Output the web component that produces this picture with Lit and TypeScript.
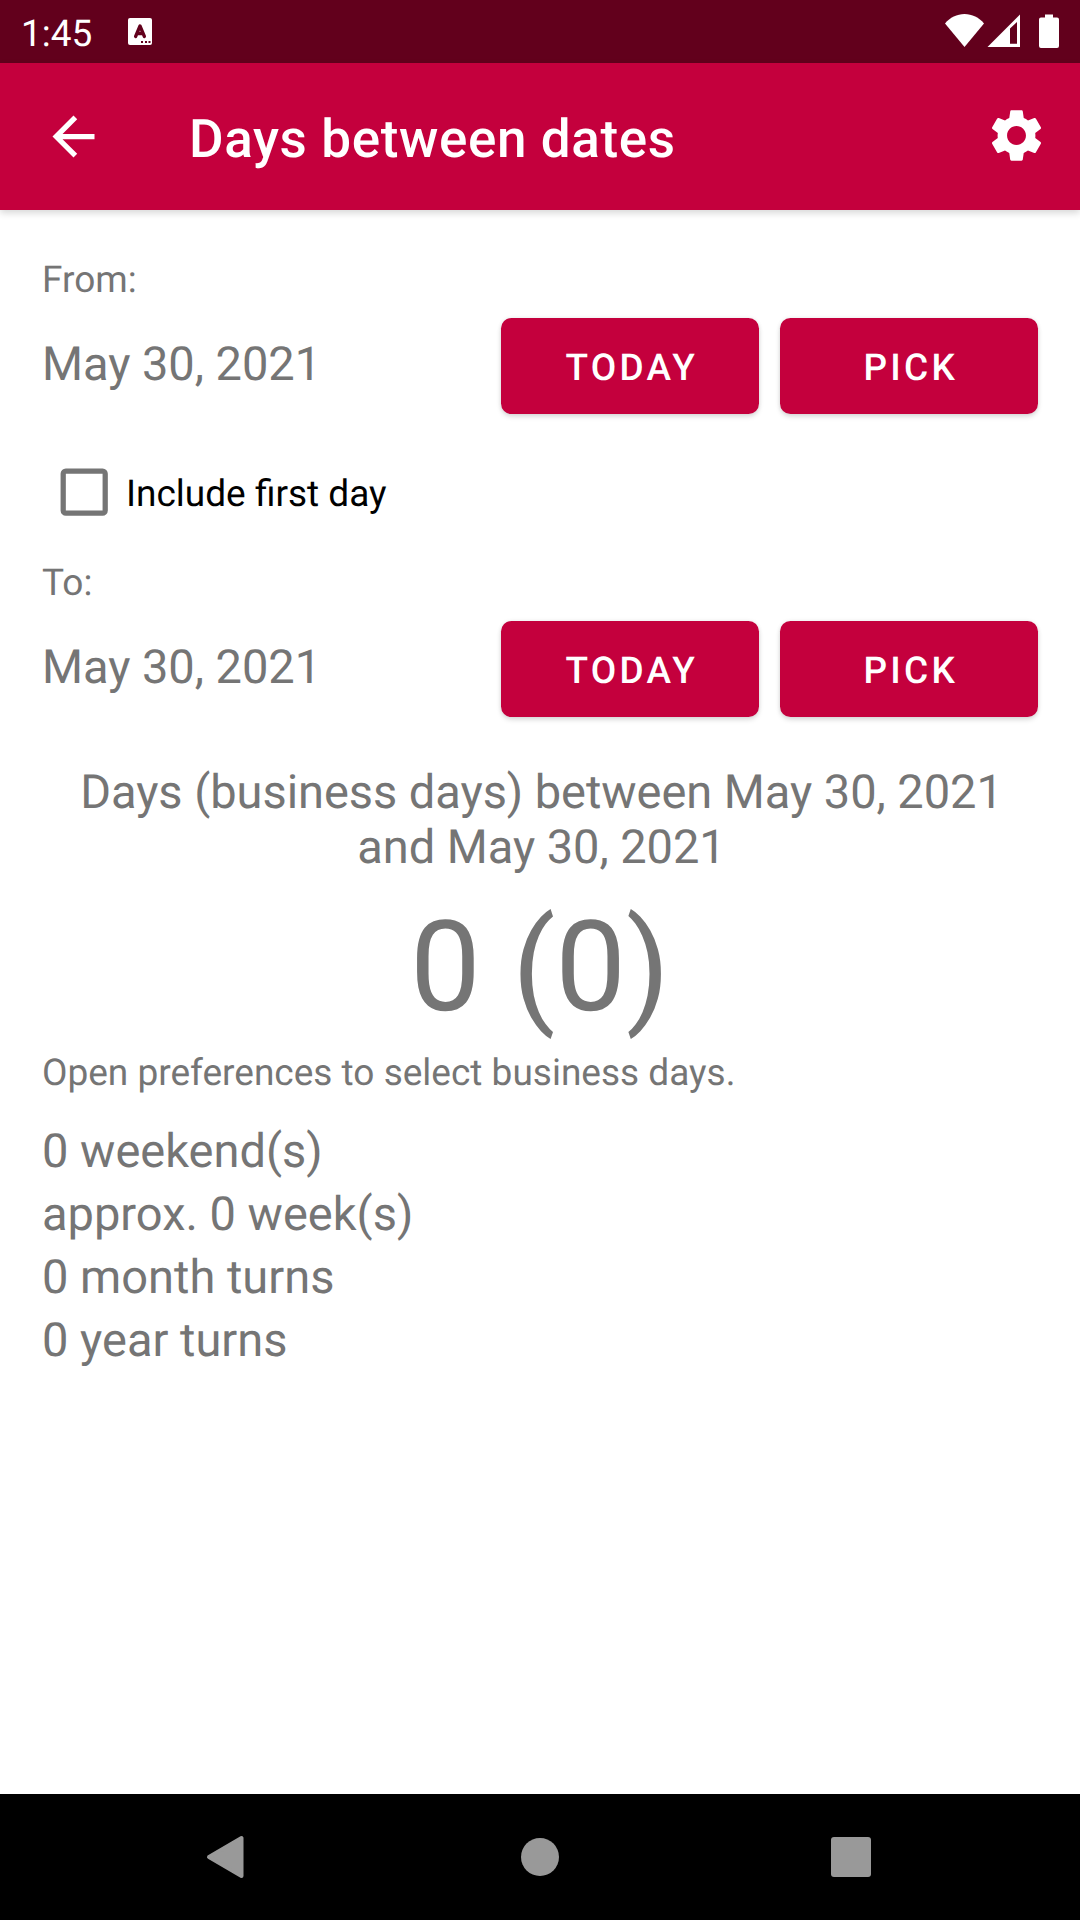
import { LitElement, html, css } from "lit";
import { customElement, property } from "lit/decorators.js";

const TODAY = "May 30, 2021";

@customElement("date-row")
class DateRow extends LitElement {
  @property() label = "";
  @property() value = "";

  static styles = css`
    :host { display: block; }
    .label { font-size: 37px; line-height: 43px; padding-top: 1px; }
    .row { display: flex; margin-top: 16px; height: 96px; align-items: flex-start; gap: 21px; }
    .date { flex: 1; font-size: 47px; line-height: 56px; padding-top: 19px; letter-spacing: -0.04px; }
    .btn {
      box-sizing: border-box; width: 258px; height: 96px; padding: 29px 0 0 3.5px; margin: 0; border: 0;
      border-radius: 10.5px; background: #c4003d; color: #fff; text-align: center;
      font: 500 37px/43px Roboto, sans-serif; letter-spacing: 0.087em;
      box-shadow: 0 3px 5px rgba(0, 0, 0, 0.13), 0 0 4px rgba(0, 0, 0, 0.08);
      display: block;
    }
  `;

  render() {
    return html`
      <div class="label">${this.label}</div>
      <div class="row">
        <div class="date">${this.value}</div>
        <div class="btn" role="button">TODAY</div>
        <div class="btn" role="button">PICK</div>
      </div>
    `;
  }
}

@customElement("app-root")
class AppRoot extends LitElement {
  static styles = css`
    :host {
      display: flex; flex-direction: column; width: 1080px; height: 1920px; overflow: hidden;
      background: #fff; color: #757575; font-family: Roboto, sans-serif;
      text-rendering: geometricPrecision;
    }
    svg { display: block; flex: none; }
    .status {
      display: flex; height: 63px; background: #62001c; color: #fff; box-sizing: border-box;
      padding-left: 21px; flex: none;
    }
    .time { font-size: 37px; line-height: 43px; padding-top: 13px; width: 99px; }
    .fill { flex: 1; }
    .bar {
      display: flex; height: 147px; flex: none; background: #c4003d; color: #fff; align-items: center;
      box-sizing: border-box; padding: 0 32px 0 42px;
      box-shadow: 0 3px 7px rgba(0, 0, 0, 0.16);
    }
    .title { flex: 1; font-size: 53px; line-height: 62px; font-weight: 500; padding: 4px 0 0 84px; letter-spacing: 0.62px; }
    .gear { margin-bottom: 2px; }
    .main { flex: 1; padding: 48px 42px 0; }
    .check { display: flex; margin: 54px 0 45px; height: 48px; padding-left: 18px; gap: 18px; color: #000; }
    .check-label { font-size: 37px; line-height: 43px; padding-top: 5px; }
    .summary { margin-top: 48px; padding-left: 3px; text-align: center; font-size: 47px; line-height: 55px; letter-spacing: -0.05px; }
    .total { margin-top: 18px; text-align: center; font-size: 126px; line-height: 148px; }
    .hint { margin-top: 11px; font-size: 37px; line-height: 43px; }
    .stats { margin-top: 25px; font-size: 47px; line-height: 63px; }
    .nav { flex: none; height: 126px; background: #000; }
  `;

  render() {
    return html`
      <div class="status">
        <div class="time">1:45</div>
        <svg width="40" height="63" viewBox="120 0 40 63">
          <path fill="#fff" d="M130 18h20a2 2 0 0 1 2 2v23a2 2 0 0 1-2 2h-20a2 2 0 0 1-2-2V20a2 2 0 0 1 2-2z" />
          <path fill="none" stroke="#62001c" stroke-width="3.300" stroke-linecap="round" stroke-linejoin="round" d="M135.600 36.500l4.400-10.500 4.400 10.500M137 33.500h6" />
          <path fill="#62001c" d="M141 41h2v2h-2zM145 41h2v2h-2zM148.500 41h2v2h-2z" />
        </svg>
        <div class="fill"></div>
        <svg width="140" height="63" viewBox="940 0 140 63">
          <path fill="#fff" d="M964.500 47L945 23.500C950 17.500 957 14 964.500 14S979 17.500 984 23.500z" />
          <path fill="#fff" fill-rule="evenodd" d="M987.500 47L1020 14.500V47zM1010 43.800h7V22l-7 6.500z" />
          <path fill="#fff" d="M1045 14.500h8v3h4a2 2 0 0 1 2 2V46a2 2 0 0 1-2 2h-16a2 2 0 0 1-2-2V19.500a2 2 0 0 1 2-2h4z" />
        </svg>
      </div>
      <div class="bar">
        <svg width="63" height="63" viewBox="0 0 24 24">
          <path fill="#fff" d="M20 11H7.830l5.590-5.590L12 4l-8 8 8 8 1.410-1.410L7.830 13H20z" />
        </svg>
        <div class="title">Days between dates</div>
        <svg class="gear" width="63" height="63" viewBox="0 0 24 24">
          <path fill="#fff" d="M19.14,12.94c0.04-0.3,0.06-0.61,0.06-0.94c0-0.32-0.02-0.64-0.07-0.94l2.03-1.58c0.18-0.14,0.23-0.41,0.12-0.61l-1.92-3.32c-0.12-0.22-0.37-0.29-0.59-0.22l-2.39,0.96c-0.5-0.38-1.03-0.7-1.62-0.94L14.4,2.81c-0.04-0.24-0.24-0.41-0.48-0.41h-3.84c-0.24,0-0.43,0.17-0.47,0.41L9.25,5.35C8.66,5.59,8.12,5.92,7.63,6.29L5.24,5.33c-0.22-0.08-0.47,0-0.59,0.22L2.74,8.87C2.62,9.08,2.66,9.34,2.86,9.48l2.03,1.58C4.84,11.36,4.8,11.69,4.8,12s0.02,0.64,0.07,0.94l-2.03,1.58c-0.18,0.14-0.23,0.41-0.12,0.61l1.92,3.32c0.12,0.22,0.37,0.29,0.59,0.22l2.39-0.96c0.5,0.38,1.03,0.7,1.62,0.94l0.36,2.54c0.05,0.24,0.24,0.41,0.48,0.41h3.84c0.24,0,0.44-0.17,0.47-0.41l0.36-2.54c0.59-0.24,1.13-0.56,1.62-0.94l2.39,0.96c0.22,0.08,0.47,0,0.59-0.22l1.92-3.32c0.12-0.22,0.07-0.47-0.12-0.61L19.14,12.94zM12,15.6c-1.98,0-3.6-1.62-3.6-3.6s1.62-3.6,3.6-3.6s3.6,1.62,3.6,3.6S13.98,15.6,12,15.6z" />
        </svg>
      </div>
      <div class="main">
        <date-row label="From:" value=${TODAY}></date-row>
        <div class="check">
          <svg width="48" height="48" viewBox="0 0 48 48">
            <rect x="3.200" y="3.100" width="42" height="42" rx="2.600" fill="none" stroke="#757575" stroke-width="5.250" />
          </svg>
          <div class="check-label">Include first day</div>
        </div>
        <date-row label="To:" value=${TODAY}></date-row>
        <div class="summary">Days (business days) between ${TODAY} and ${TODAY}</div>
        <div class="total">0 (0)</div>
        <div class="hint">Open preferences to select business days.</div>
        <div class="stats">
          <div>0 weekend(s)</div>
          <div>approx. 0 week(s)</div>
          <div>0 month turns</div>
          <div>0 year turns</div>
        </div>
      </div>
      <svg class="nav" width="1080" height="126" viewBox="0 0 1080 126">
        <path fill="#999" stroke="#999" stroke-width="4" stroke-linejoin="round" d="M209 63L241.500 44V82z" />
        <circle cx="540" cy="63" r="19" fill="#999" />
        <rect x="831" y="43" width="40" height="40" rx="3" fill="#999" />
      </svg>
    `;
  }
}
